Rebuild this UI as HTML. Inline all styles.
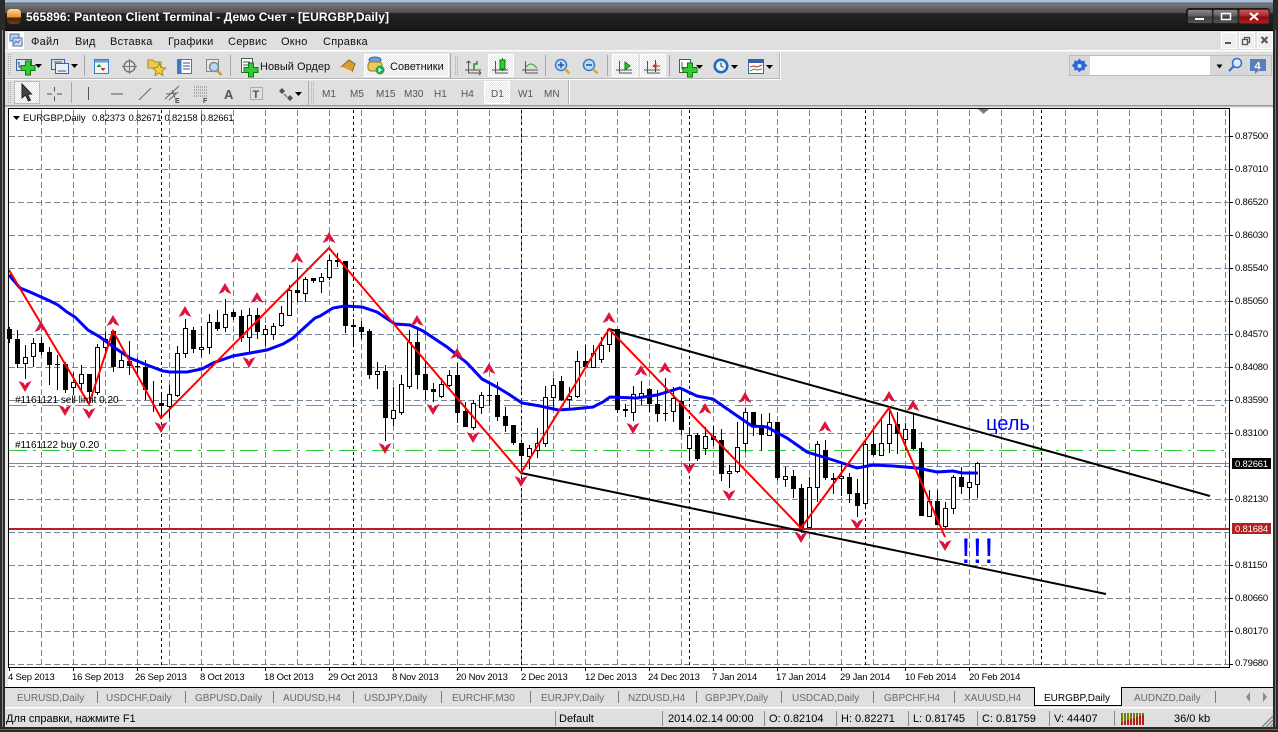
<!DOCTYPE html>
<html><head><meta charset="utf-8"><title>Terminal</title>
<style>
html,body{margin:0;padding:0;background:#dfdfdf;overflow:hidden}
svg{display:block;font-family:"Liberation Sans","Noto Sans CJK SC",sans-serif}
</style></head><body>
<svg xmlns="http://www.w3.org/2000/svg" width="1278" height="732" viewBox="0 0 1278 732">
<defs>
<linearGradient id="tb" x1="0" y1="0" x2="0" y2="1"><stop offset="0" stop-color="#8a8a8a"/><stop offset=".42" stop-color="#4d4d4d"/><stop offset=".43" stop-color="#232323"/><stop offset="1" stop-color="#161616"/></linearGradient>
<linearGradient id="wb" x1="0" y1="0" x2="0" y2="1"><stop offset="0" stop-color="#8c8c8c"/><stop offset=".5" stop-color="#5a5a5a"/><stop offset=".51" stop-color="#3a3a3a"/><stop offset="1" stop-color="#555"/></linearGradient>
<linearGradient id="wr" x1="0" y1="0" x2="0" y2="1"><stop offset="0" stop-color="#d06060"/><stop offset=".5" stop-color="#a82020"/><stop offset=".51" stop-color="#8a0c0c"/><stop offset="1" stop-color="#b02020"/></linearGradient>
<linearGradient id="org" x1="0" y1="0" x2="0" y2="1"><stop offset="0" stop-color="#ffd9a0"/><stop offset=".55" stop-color="#f08a20"/><stop offset=".56" stop-color="#3a2010"/><stop offset="1" stop-color="#7a3a10"/></linearGradient>
<pattern id="chk" width="2" height="2" patternUnits="userSpaceOnUse"><rect width="2" height="2" fill="#e4e4e4"/><rect width="1" height="1" fill="#fff"/><rect x="1" y="1" width="1" height="1" fill="#fff"/></pattern>
<g id="plus"><path d="M-2.500-7h5v4.500h4.500v5h-4.500v4.500h-5v-4.500h-4.500v-5h4.500z" fill="#35c935" stroke="#0b7d0b" stroke-width="1"/></g>
<path id="dd" d="M0 0h7l-3.500 4z" fill="#000"/>
<path id="up" d="M0-6L6.500 5 1.500 3 0 .5-1.500 3-6.500 5z" fill="#dc143c"/>
<path id="dn" d="M0 6L6.500-5 1.500-3 0-.5-1.500-3-6.500-5z" fill="#dc143c"/>
</defs>

<!-- frame / title -->
<rect width="1278" height="732" fill="#dfdfdf"/>
<rect width="1278" height="31" fill="url(#tb)"/>
<rect width="1278" height="2.500" fill="#a9c0dd"/>
<rect y="2.500" width="1278" height="1" fill="#5a6370"/>
<rect x="0" y="0" width="5" height="732" fill="#2a2a2a"/>
<rect x="2" y="30" width="1" height="698" fill="#8a8a8a"/>
<rect x="1273" y="0" width="5" height="732" fill="#2a2a2a"/>
<rect x="1275" y="30" width="1" height="698" fill="#7a7a7a"/>
<rect x="0" y="727" width="1278" height="5" fill="#2a2a2a"/>
<rect x="0" y="729" width="1278" height="1" fill="#6a6a6a"/>
<rect x="5" y="30" width="1268" height="1" fill="#000"/>
<rect x="7" y="9" width="14" height="15" rx="4" fill="url(#org)"/>
<text x="26" y="21" font-size="12" font-weight="700" fill="#fff" textLength="363">565896: Panteon Client Terminal - Демо Счет - [EURGBP,Daily]</text>
<rect x="1186" y="8" width="84" height="17" rx="3" fill="#1a1a1a"/>
<rect x="1187.500" y="9.500" width="25" height="14" rx="2" fill="url(#wb)" stroke="#222"/>
<rect x="1213" y="9.500" width="25" height="14" rx="2" fill="url(#wb)" stroke="#222"/>
<rect x="1239" y="9.500" width="30" height="14" rx="2" fill="url(#wr)" stroke="#333"/>
<rect x="1195" y="18" width="9" height="2" fill="#fff"/>
<rect x="1221.500" y="13.500" width="9" height="6" fill="none" stroke="#fff" stroke-width="1.500"/>
<path d="M1250 13l8 7M1258 13l-8 7" stroke="#fff" stroke-width="2"/>

<!-- menu -->
<rect x="8" y="32" width="16" height="17" fill="#fff"/>
<rect x="10" y="34" width="9" height="7" fill="#bcd3ee" stroke="#4a6ea8"/>
<rect x="13" y="38" width="9" height="8" fill="#cfe0f5" stroke="#4a6ea8"/>
<path d="M14 44l2-3 2 2 2-3" fill="none" stroke="#4a6ea8"/>
<g font-size="11" fill="#111" letter-spacing=".25">
<text x="31" y="45">Файл</text><text x="75" y="45">Вид</text><text x="110" y="45">Вставка</text><text x="168" y="45">Графики</text><text x="228" y="45">Сервис</text><text x="281" y="45">Окно</text><text x="323" y="45">Справка</text>
</g>
<g fill="#efefef" stroke="#fff"><rect x="1221.500" y="32.500" width="15" height="16"/><rect x="1239.500" y="32.500" width="15" height="16"/><rect x="1257.500" y="32.500" width="15" height="16"/></g>
<rect x="1225" y="42" width="6" height="2" fill="#555"/>
<path d="M1242.500 39.500h5v5h-5zM1244.500 39.500v-2h5v5h-2" fill="none" stroke="#555" stroke-width="1.300"/>
<path d="M1261.500 37l6 6M1267.500 37l-6 6" stroke="#555" stroke-width="2"/>
<rect x="5" y="50" width="1268" height="1.500" fill="#fff"/>

<!-- toolbars background -->
<rect x="5" y="52" width="775" height="26" fill="#dfdfdf"/>
<path d="M5 78.500H779.500V53" fill="none" stroke="#b4b4b4"/>
<path d="M5 79.500H780.500V53" fill="none" stroke="#fff"/>
<path d="M568.500 80V105" stroke="#b4b4b4"/><path d="M569.500 80V105" stroke="#fff"/>
<rect x="5" y="105" width="1268" height="1.500" fill="#9a9a9a"/>
<rect x="5" y="106.500" width="1268" height="1.500" fill="#e8e8e8"/>
<!-- grips -->
<g stroke="#aaa" stroke-dasharray="1 1"><path d="M8.500 54V76M10.500 54V76M8.500 82V104M10.500 82V104M455.500 56V76M457.500 56V76M311.500 82V104M313.500 82V104"/></g>
<!-- separators -->
<g stroke="#a8a8a8"><path d="M84.500 55V76M230.500 55V76M450.500 53V78M545.500 55V76M607.500 55V76M669.500 55V76M71.500 82V103M308.500 81V105"/></g>

<!-- row1 icons -->
<rect x="16.500" y="59.500" width="15" height="11" fill="#d8e6f8" stroke="#3a62a8"/>
<path d="M19 62v5h7M19 62l-1 1M26 67l-1-1" stroke="#444" fill="none"/>
<use href="#plus" x="28" y="68"/>
<use href="#dd" x="35" y="64"/>
<rect x="51.500" y="59.500" width="13" height="10" fill="#d8e6f8" stroke="#3a62a8"/>
<rect x="55.500" y="63.500" width="13" height="10" fill="#e8f0fb" stroke="#3a62a8"/>
<path d="M54 62h8M58 71h8" stroke="#555"/>
<use href="#dd" x="71" y="64"/>
<rect x="94.500" y="59.500" width="14" height="14" fill="#eef5fd" stroke="#3a7cc0"/>
<rect x="95" y="60" width="13" height="2.500" fill="#6aa0dc"/>
<path d="M99 64l2.500 3h-5zM103 71l-2.500-3h5z" fill="#1a9a1a"/><path d="M103 71l-2.500-3h5z" fill="#d83020"/>
<circle cx="129.500" cy="66.500" r="5.500" fill="none" stroke="#777" stroke-width="1.500"/><path d="M129.500 59V74M122 66.500H137" stroke="#777"/>
<path d="M148 60h5l2 2h6v6h-13z" fill="#f0c95a" stroke="#a88a20"/>
<path d="M159 63l2 4.500 4.500.5-3.500 3 1 4.500-4-2.500-4 2.500 1-4.500-3.500-3 4.500-.5z" fill="#f5d030" stroke="#a88a20"/>
<rect x="177.500" y="59.500" width="14" height="14" fill="#fff" stroke="#3a7cc0"/><rect x="178" y="60" width="3.500" height="13" fill="#3a7cc0"/><path d="M183 63h7M183 66h7M183 69h7" stroke="#4a4a8a"/>
<rect x="206.500" y="59.500" width="12" height="12" fill="#e8e8e8" stroke="#888"/>
<circle cx="214" cy="67" r="4.500" fill="#bcd8f0" stroke="#7a8a9a" stroke-width="1.500"/><path d="M217 70.500l4.500 4.500" stroke="#c9a020" stroke-width="2.500"/>
<rect x="241.500" y="58.500" width="11" height="14" fill="#fff" stroke="#555"/><path d="M243 62h7M243 65h5" stroke="#555"/>
<use href="#plus" x="251" y="70"/>
<text x="260" y="70" font-size="11" fill="#111">Новый Ордер</text>
<path d="M341 67l8-7 6 4-3 8z" fill="#d8a030" stroke="#8a6010"/><path d="M341 67l11 5" stroke="#fff0b0"/>
<rect x="364.500" y="54.500" width="84" height="22" fill="url(#chk)" stroke="#fff"/>
<ellipse cx="375" cy="60" rx="6" ry="3" fill="#6aa0dc" stroke="#3a62a8"/>
<rect x="368" y="62" width="14" height="9" rx="3" fill="#f0c95a" stroke="#8a7a30"/>
<circle cx="380" cy="70" r="4.500" fill="#20a850"/><path d="M378.500 67.500l3.500 2.500-3.500 2.500z" fill="#fff"/>
<text x="390" y="70" font-size="11" fill="#111">Советники</text>

<g stroke="#555" fill="none"><path d="M468.500 61V73H481M468.500 61l-2 2M468.500 61l2 2M481 73l-2-2M481 73l-2 2M465 70H481"/></g>
<path d="M474 70V64h3v-3" fill="none" stroke="#1a9a1a" stroke-width="1.500"/>
<rect x="488.500" y="54.500" width="25" height="22" fill="url(#chk)" stroke="#fff"/>
<g stroke="#555" fill="none"><path d="M495.500 61V73H508M492 70H508"/></g>
<path d="M502.500 58V71" stroke="#0a7a0a"/><rect x="500" y="60" width="5" height="9" fill="#30d030" stroke="#0a7a0a"/>
<g stroke="#555" fill="none"><path d="M525.500 61V73H538M522 70H538"/></g><path d="M525 69c3-6 7-7 12-1" fill="none" stroke="#3a9a3a"/>
<circle cx="561" cy="65" r="5.500" fill="#bcdcf8" stroke="#3a7cc0" stroke-width="1.500"/><path d="M558 65h6M561 62v6" stroke="#1a5aa0" stroke-width="1.500"/><path d="M565 69l4.500 4.500" stroke="#d8a828" stroke-width="2.500"/>
<circle cx="589" cy="65" r="5.500" fill="#bcdcf8" stroke="#3a7cc0" stroke-width="1.500"/><path d="M586 65h6" stroke="#1a5aa0" stroke-width="1.500"/><path d="M593 69l4.500 4.500" stroke="#d8a828" stroke-width="2.500"/>
<rect x="612.500" y="54.500" width="25" height="22" fill="url(#chk)" stroke="#fff"/>
<g stroke="#555" fill="none"><path d="M619.500 61V73H632M616 70H632"/></g><path d="M625 62l5 4-5 4z" fill="#30c030" stroke="#0a7a0a"/>
<rect x="640.500" y="54.500" width="25" height="22" fill="url(#chk)" stroke="#fff"/>
<g stroke="#555" fill="none"><path d="M647.500 61V73H660M644 70H660"/></g><path d="M655.500 60V72" stroke="#1a4a9a"/><path d="M653 66h7M656 64l-3 2 3 2z" stroke="#c03020" fill="#c03020"/>
<rect x="679.500" y="59.500" width="11" height="13" fill="#fff" stroke="#555"/><path d="M682 62v7h6" stroke="#555" fill="none"/>
<use href="#plus" x="690" y="70"/>
<use href="#dd" x="696" y="65"/>
<circle cx="721" cy="66" r="7.500" fill="#1a6ac0"/><circle cx="721" cy="66" r="5" fill="#eaf2fb"/><path d="M721 62.500V66l2.500 1.500" stroke="#333" fill="none"/>
<use href="#dd" x="731" y="65"/>
<rect x="748.500" y="59.500" width="15" height="14" fill="#fff" stroke="#3a62a8"/><rect x="749" y="60" width="14" height="3" fill="#3a62a8"/>
<path d="M750 67l4-1 3 1 5-2" stroke="#c03020" fill="none"/><path d="M750 71l4-2 3 1 5-1" stroke="#30a030" fill="none"/>
<use href="#dd" x="766" y="65"/>

<!-- search group -->
<rect x="1069.500" y="55.500" width="202" height="20" fill="#d8d8d8" stroke="#bdbdbd"/>
<rect x="1090" y="56" width="120" height="19" fill="#fff"/>
<path d="M1079.500 58.500l2 2.500 3-.5.500 3 2.500 2-2.500 2-.5 3-3-.5-2 2.500-2-2.500-3 .5-.5-3-2.500-2 2.500-2 .5-3 3 .5z" fill="#2a6ad8"/><circle cx="1079.500" cy="66" r="2" fill="#cfe0fa"/>
<path d="M1216.500 64.500h6l-3 4z" fill="#000"/>
<circle cx="1237" cy="63" r="4.500" fill="#e4eefb" stroke="#2a6ad8" stroke-width="1.500"/><path d="M1233.500 66.500l-4.500 4.500" stroke="#2a6ad8" stroke-width="2"/>
<path d="M1250 59h16v12h-8l-3 3v-3h-5z" fill="#5a7fb8"/><text x="1254.500" y="69.500" font-size="11" font-weight="700" fill="#fff">4</text>

<!-- row2 icons -->
<rect x="14.500" y="81.500" width="25" height="22" fill="url(#chk)" stroke="#bbb"/>
<path d="M22 84V98l3.500-3 3 6 2-1-3-5.500 4-.5z" fill="#444" stroke="#222"/>
<path d="M54.500 87V91.500M54.500 96.500V101M47 94H52M57 94H62" stroke="#555"/>
<path d="M88.500 87V100" stroke="#555"/><path d="M111 94H123" stroke="#555"/><path d="M139 100L151 88" stroke="#666"/>
<g stroke="#666" fill="none"><path d="M165 99L179 86M169 100L178 92M172 90l3 8M166 94l10-1"/></g><text x="175" y="103" font-size="7" font-weight="700" fill="#444">E</text>
<path d="M194 87h13M194 90h13M194 93h13M194 96h13" stroke="#777" stroke-dasharray="1 1"/><text x="203" y="103" font-size="7" font-weight="700" fill="#444">F</text>
<text x="224" y="99" font-size="13" font-weight="700" fill="#555">A</text>
<rect x="250.500" y="87.500" width="12" height="12" fill="none" stroke="#777" stroke-dasharray="1 1"/><text x="252.500" y="98" font-size="11" font-weight="700" fill="#555">T</text>
<path d="M279 91l3-3 3 3-3 3zM287 98l3-3 3 3-3 3z" fill="#555"/><path d="M284 94l3 3" stroke="#555"/><use href="#dd" x="295" y="92"/>
<g font-size="10" fill="#555">
<text x="322" y="97">M1</text><text x="350" y="97">M5</text><text x="376" y="97">M15</text><text x="404" y="97">M30</text><text x="434" y="97">H1</text><text x="461" y="97">H4</text>
</g>
<rect x="484.500" y="81.500" width="25" height="22" fill="url(#chk)" stroke="#fff"/>
<g font-size="10" fill="#555"><text x="491" y="97">D1</text><text x="518" y="97">W1</text><text x="544" y="97">MN</text></g>

<!-- chart area -->
<rect x="5" y="108" width="1268" height="579" fill="#fff"/>
<rect x="5" y="108" width="3" height="579" fill="#e8e8e8"/>

<!-- grid -->
<path fill="none" stroke="#778899" stroke-dasharray="6 3" d="M41.500 110V667M73.500 110V667M105.500 110V667M137.500 110V667M169.500 110V667M201.500 110V667M233.500 110V667M265.500 110V667M297.500 110V667M329.500 110V667M361.500 110V667M393.500 110V667M425.500 110V667M457.500 110V667M489.500 110V667M521.500 110V667M553.500 110V667M585.500 110V667M617.500 110V667M649.500 110V667M681.500 110V667M713.500 110V667M745.500 110V667M777.500 110V667M809.500 110V667M841.500 110V667M873.500 110V667M905.500 110V667M937.500 110V667M969.500 110V667M1001.500 110V667M1033.500 110V667M1065.500 110V667M1097.500 110V667M1129.500 110V667M1161.500 110V667M1193.500 110V667M1225.500 110V667"/>
<path fill="none" stroke="#778899" stroke-dasharray="6 3" d="M9 136.500H1229M9 169.500H1229M9 202.500H1229M9 235.500H1229M9 268.500H1229M9 301.500H1229M9 334.500H1229M9 367.500H1229M9 400.500H1229M9 433.500H1229M9 466.500H1229M9 499.500H1229M9 532.500H1229M9 565.500H1229M9 598.500H1229M9 631.500H1229M9 664.500H1229"/>
<path fill="none" stroke="#000" stroke-dasharray="3 3" d="M161.500 110V667M353.500 110V667M521.500 110V667M689.500 110V667M865.500 110V667M1041.500 110V667"/>
<path fill="none" stroke="#32cd32" stroke-dasharray="18 6 3 6" d="M9 405.500H1229M9 450.500H1229"/>
<path fill="none" stroke="#778899" d="M9 463.500H1229"/>
<rect x="9" y="528" width="1220" height="2" fill="#b22222"/>

<!-- candles -->
<path fill="none" stroke="#000" d="M9.500 327V343M17.500 330V368M25.500 345V379M33.500 338V367M41.500 337V355M49.500 347V385M57.500 355V390M65.500 362V393M73.500 373V395M81.500 365V393M89.500 374V400M97.500 344V395M105.500 332V357M113.500 330V372M121.500 352V368M129.500 341V375M137.500 358V377M145.500 360V400M153.500 381V412M161.500 393V418M169.500 385V418M177.500 346V397M185.500 319V358M193.500 327V353M201.500 326V357M209.500 314V354M217.500 310V331M225.500 299V332M233.500 310V320M241.500 310V342M249.500 308V353M257.500 308V339M265.500 325V346M273.500 323V340M281.500 306V327M289.500 285V316M297.500 268V302M305.500 277V302M313.500 278V283M321.500 273V293M329.500 255V280M337.500 253V267M345.500 261V333M353.500 319V346M361.500 321V339M369.500 329V379M377.500 362V389M385.500 365V441M393.500 387V426M401.500 375V415M409.500 330V389M417.500 330V389M425.500 362V400M433.500 383V402M441.500 378V398M449.500 370V387M457.500 363V423M465.500 402V427M473.500 400V430M481.500 392V414M489.500 383V406M497.500 382V421M505.500 407V432M513.500 425V445M521.500 443V473M529.500 445V469M537.500 428V458M545.500 386V447M553.500 378V408M561.500 376V401M569.500 387V410M577.500 351V398M585.500 345V367M593.500 345V367M601.500 337V363M609.500 328V352M617.500 329V413M625.500 404V417M633.500 386V421M641.500 381V405M649.500 388V412M657.500 390V422M665.500 378V421M673.500 387V422M681.500 390V435M689.500 427V461M697.500 433V461M705.500 427V455M713.500 426V446M721.500 429V481M729.500 465V488M737.500 422V473M745.500 408V452M753.500 412V436M761.500 414V451M769.500 413V436M777.500 422V480M785.500 467V487M793.500 470V498M801.500 484V533M809.500 477V528M817.500 441V502M825.500 440V480M833.500 473V494M841.500 463V496M849.500 473V503M857.500 479V517M865.500 441V507M873.500 430V456M881.500 420V456M889.500 408V453M897.500 412V454M905.500 423V450M913.500 413V450M921.500 442V516M929.500 490V516M937.500 490V525M945.500 502V528M953.500 475V514M961.500 467V494M969.500 472V499M977.500 462V498"/>
<path fill="#000" d="M7 329h5v10h-5zM15 339h5v25h-5zM39 343h5v9h-5zM47 352h5v13h-5zM55 364h5v1h-5zM63 364h5v26h-5zM87 374h5v18h-5zM111 331h5v36h-5zM127 361h5v5h-5zM135 366h5v1h-5zM143 367h5v23h-5zM159 403h5v3h-5zM191 330h5v19h-5zM215 322h5v7h-5zM231 312h5v5h-5zM239 316h5v22h-5zM255 315h5v17h-5zM295 290h5v3h-5zM311 278h5v3h-5zM335 260h5v2h-5zM343 261h5v65h-5zM351 325h5v2h-5zM359 327h5v5h-5zM367 331h5v44h-5zM383 371h5v47h-5zM415 342h5v33h-5zM423 374h5v16h-5zM431 389h5v3h-5zM455 375h5v38h-5zM463 411h5v16h-5zM487 395h5v1h-5zM495 395h5v22h-5zM503 416h5v10h-5zM511 425h5v18h-5zM519 443h5v13h-5zM559 381h5v19h-5zM583 361h5v6h-5zM615 329h5v81h-5zM623 409h5v2h-5zM647 389h5v15h-5zM655 404h5v10h-5zM663 413h5v1h-5zM679 401h5v29h-5zM695 435h5v24h-5zM711 436h5v4h-5zM719 440h5v34h-5zM751 412h5v13h-5zM759 425h5v10h-5zM775 422h5v56h-5zM791 476h5v13h-5zM799 488h5v40h-5zM823 450h5v28h-5zM831 478h5v2h-5zM847 477h5v17h-5zM855 493h5v13h-5zM871 444h5v11h-5zM895 424h5v10h-5zM911 429h5v20h-5zM919 448h5v68h-5zM935 501h5v24h-5zM959 477h5v10h-5z"/>
<path fill="#fff" stroke="#000" d="M23.500 357.500h4v6h-4zM31.500 343.500h4v13h-4zM71.500 382.500h4v5h-4zM79.500 374.500h4v9h-4zM95.500 347.500h4v45h-4zM103.500 339.500h4v8h-4zM119.500 360.500h4v7h-4zM167.500 394.500h4v12h-4zM175.500 353.500h4v42h-4zM183.500 328.500h4v25h-4zM199.500 347.500h4v2h-4zM207.500 322.500h4v25h-4zM223.500 314.500h4v13h-4zM247.500 315.500h4v22h-4zM263.500 329.500h4v5h-4zM271.500 326.500h4v8h-4zM279.500 313.500h4v12h-4zM287.500 290.500h4v25h-4zM303.500 279.500h4v14h-4zM319.500 277.500h4v4h-4zM327.500 260.500h4v17h-4zM375.500 371.500h4v3h-4zM391.500 410.500h4v8h-4zM399.500 384.500h4v28h-4zM407.500 342.500h4v44h-4zM439.500 384.500h4v12h-4zM447.500 375.500h4v10h-4zM471.500 403.500h4v24h-4zM479.500 395.500h4v12h-4zM527.500 448.500h4v8h-4zM535.500 443.500h4v7h-4zM543.500 397.500h4v46h-4zM551.500 385.500h4v12h-4zM567.500 396.500h4v3h-4zM575.500 361.500h4v35h-4zM591.500 353.500h4v14h-4zM599.500 345.500h4v14h-4zM607.500 329.500h4v15h-4zM631.500 394.500h4v18h-4zM639.500 393.500h4v3h-4zM671.500 398.500h4v13h-4zM687.500 435.500h4v13h-4zM703.500 436.500h4v12h-4zM727.500 471.500h4v2h-4zM735.500 447.500h4v24h-4zM743.500 412.500h4v31h-4zM767.500 422.500h4v13h-4zM783.500 476.500h4v3h-4zM807.500 487.500h4v40h-4zM815.500 444.500h4v43h-4zM839.500 476.500h4v2h-4zM863.500 444.500h4v59h-4zM879.500 443.500h4v12h-4zM887.500 424.500h4v19h-4zM903.500 429.500h4v10h-4zM927.500 501.500h4v15h-4zM943.500 508.500h4v18h-4zM951.500 477.500h4v31h-4zM967.500 482.500h4v5h-4zM975.500 463.500h4v21h-4z"/>

<!-- indicator lines -->
<polyline fill="none" stroke="#0000ff" stroke-width="3" points="9,275 20,288 30,292 50,301 58,305 67,312 75,317 88,330 100,337 115,348 130,358 147,365 163,371 170,372 187,372 202,369 213,363 233,356 250,353 267,350 283,344 293,338 305,327 315,318 320,316 333,308 345,306 362,307 377,312 395,324 410,325 423,331 447,347 467,363 482,379 497,387 510,395 522,403 540,406 558,410 573,409 593,407 603,402 610,397 637,398 657,395 680,388 697,396 713,399 733,413 752,426 767,427 787,438 807,452 833,460 857,468 873,465 893,466 917,468 937,472 953,471 962,473 978,473"/>
<path fill="none" stroke="#000" stroke-width="2" d="M609 329L1210 496M521 473L1106 594"/>
<polyline fill="none" stroke="#ff0000" stroke-width="2" points="9,270 89,404 113,331 161,418 329,248 521,473 609,329 801,528 889,408 945,537"/>

<!-- fractal arrows -->
<use href="#up" x="41" y="327"/><use href="#up" x="113" y="321"/><use href="#up" x="185" y="312"/><use href="#up" x="225" y="289"/><use href="#up" x="257" y="298"/><use href="#up" x="297" y="258"/><use href="#up" x="329" y="238"/><use href="#up" x="417" y="321"/><use href="#up" x="457" y="354"/><use href="#up" x="489" y="369"/><use href="#up" x="609" y="318"/><use href="#up" x="641" y="371"/><use href="#up" x="665" y="368"/><use href="#up" x="705" y="409"/><use href="#up" x="745" y="398"/><use href="#up" x="825" y="427"/><use href="#up" x="889" y="397"/><use href="#up" x="913" y="406"/>
<use href="#dn" x="25" y="386"/><use href="#dn" x="65" y="410"/><use href="#dn" x="89" y="413"/><use href="#dn" x="161" y="427"/><use href="#dn" x="249" y="362"/><use href="#dn" x="385" y="448"/><use href="#dn" x="433" y="409"/><use href="#dn" x="473" y="437"/><use href="#dn" x="521" y="481"/><use href="#dn" x="633" y="428"/><use href="#dn" x="689" y="468"/><use href="#dn" x="729" y="495"/><use href="#dn" x="801" y="537"/><use href="#dn" x="857" y="524"/><use href="#dn" x="945" y="545"/>

<!-- chart text -->
<text x="15" y="403" font-size="10" fill="#000">#1161121 sell limit 0.20</text>
<text x="15" y="448" font-size="10" fill="#000">#1161122 buy 0.20</text>
<text x="986" y="430" font-size="20" fill="#0000ff">цель</text>
<g font-size="35" fill="#0000ff"><text x="961" y="563">!</text><text x="972.500" y="563">!</text><text x="984" y="563">!</text></g>
<path d="M13 116h7l-3.500 4z" fill="#000"/>
<g font-size="9.500" fill="#000"><text x="23" y="121">EURGBP,Daily</text><text x="92" y="121" letter-spacing="-.2">0.82373</text><text x="128.500" y="121" letter-spacing="-.2">0.82671</text><text x="164.500" y="121" letter-spacing="-.2">0.82158</text><text x="200.500" y="121" letter-spacing="-.2">0.82661</text></g>
<path d="M978 109h11l-5.500 5z" fill="#708090"/>

<!-- chart border -->
<path d="M8.500 667.500V108.500H1229.500V667.500Z" fill="none" stroke="#000"/>

<!-- price axis -->
<path stroke="#000" d="M1230 136.500h3M1230 169.500h3M1230 202.500h3M1230 235.500h3M1230 268.500h3M1230 301.500h3M1230 334.500h3M1230 367.500h3M1230 400.500h3M1230 433.500h3M1230 499.500h3M1230 565.500h3M1230 598.500h3M1230 631.500h3M1230 664.500h3"/>
<g font-size="9.500" fill="#000" letter-spacing="-.2">
<text x="1235" y="139">0.87500</text><text x="1235" y="172">0.87010</text><text x="1235" y="205">0.86520</text><text x="1235" y="238">0.86030</text><text x="1235" y="271">0.85540</text><text x="1235" y="304">0.85050</text><text x="1235" y="337">0.84570</text><text x="1235" y="370">0.84080</text><text x="1235" y="403">0.83590</text><text x="1235" y="436">0.83100</text><text x="1235" y="502">0.82130</text><text x="1235" y="568">0.81150</text><text x="1235" y="601">0.80660</text><text x="1235" y="634">0.80170</text><text x="1235" y="666">0.79680</text>
</g>
<rect x="1232" y="458" width="39" height="11" fill="#000"/>
<text x="1235" y="467" font-size="9.500" fill="#fff" letter-spacing="-.2">0.82661</text>
<rect x="1232" y="523" width="39" height="11" fill="#b22222"/>
<text x="1235" y="532" font-size="9.500" fill="#fff" letter-spacing="-.2">0.81684</text>

<!-- time axis -->
<path stroke="#000" d="M9.500 668v3M73.500 668v3M137.500 668v3M201.500 668v3M265.500 668v3M329.500 668v3M393.500 668v3M457.500 668v3M521.500 668v3M585.500 668v3M649.500 668v3M713.500 668v3M777.500 668v3M841.500 668v3M905.500 668v3M969.500 668v3"/>
<g font-size="9.500" fill="#000" letter-spacing="-.2">
<text x="8" y="680">4 Sep 2013</text><text x="72" y="680">16 Sep 2013</text><text x="135" y="680">26 Sep 2013</text><text x="200" y="680">8 Oct 2013</text><text x="264" y="680">18 Oct 2013</text><text x="328" y="680">29 Oct 2013</text><text x="392" y="680">8 Nov 2013</text><text x="456" y="680">20 Nov 2013</text><text x="521" y="680">2 Dec 2013</text><text x="585" y="680">12 Dec 2013</text><text x="648" y="680">24 Dec 2013</text><text x="712" y="680">7 Jan 2014</text><text x="776" y="680">17 Jan 2014</text><text x="840" y="680">29 Jan 2014</text><text x="905" y="680">10 Feb 2014</text><text x="969" y="680">20 Feb 2014</text>
</g>

<!-- tabs -->
<rect x="5" y="687" width="1268" height="1" fill="#000"/>
<rect x="5" y="688" width="1268" height="19" fill="#dfdfdf"/>
<path stroke="#7a7a7a" d="M97.500 691v12M185.500 691v12M273.500 691v12M353.500 691v12M441.500 691v12M530.500 691v12M618.500 691v12M696.500 691v12M781.500 691v12M873.500 691v12M954.500 691v12M1215.500 691v12"/>
<g font-size="10" fill="#6a6a6a">
<text x="17" y="701">EURUSD,Daily</text><text x="106" y="701">USDCHF,Daily</text><text x="195" y="701">GBPUSD,Daily</text><text x="283" y="701">AUDUSD,H4</text><text x="364" y="701">USDJPY,Daily</text><text x="452" y="701">EURCHF,M30</text><text x="541" y="701">EURJPY,Daily</text><text x="628" y="701">NZDUSD,H4</text><text x="705" y="701">GBPJPY,Daily</text><text x="792" y="701">USDCAD,Daily</text><text x="884" y="701">GBPCHF,H4</text><text x="964" y="701">XAUUSD,H4</text><text x="1134" y="701">AUDNZD,Daily</text>
</g>
<path d="M1034.500 687.500V705.500H1121.500V687.500" fill="#fff" stroke="#000"/>
<rect x="1035" y="687" width="86" height="2" fill="#fff"/>
<text x="1044" y="701" font-size="10" fill="#000">EURGBP,Daily</text>
<path d="M1250 692v10l-4-5zM1263 692v10l4-5z" fill="#8a8a8a"/>
<rect x="5" y="707" width="1268" height="1.500" fill="#fff"/>

<!-- status -->
<rect x="5" y="708.500" width="1268" height="18.500" fill="#dfdfdf"/>
<path stroke="#8a8a8a" d="M555.500 711v15M662.500 711v15M764.500 711v15M836.500 711v15M908.500 711v15M977.500 711v15M1049.500 711v15M1114.500 711v15"/>
<g font-size="11" fill="#000">
<text x="6" y="722">Для справки, нажмите F1</text><text x="559" y="722">Default</text><text x="668" y="722">2014.02.14 00:00</text><text x="769" y="722">O: 0.82104</text><text x="841" y="722">H: 0.82271</text><text x="913" y="722">L: 0.81745</text><text x="982" y="722">C: 0.81759</text><text x="1054" y="722">V: 44407</text><text x="1174" y="722">36/0 kb</text>
</g>
<g fill="#6f8000"><rect x="1121" y="713" width="2" height="9"/><rect x="1124" y="713" width="2" height="8"/><rect x="1127" y="713" width="2" height="7"/><rect x="1130" y="713" width="2" height="6"/><rect x="1133" y="713" width="2" height="5"/><rect x="1136" y="713" width="2" height="4"/><rect x="1139" y="713" width="2" height="3"/><rect x="1142" y="713" width="2" height="2"/></g>
<g fill="#b02010"><rect x="1121" y="722" width="2" height="3"/><rect x="1124" y="721" width="2" height="4"/><rect x="1127" y="720" width="2" height="5"/><rect x="1130" y="719" width="2" height="6"/><rect x="1133" y="718" width="2" height="7"/><rect x="1136" y="717" width="2" height="8"/><rect x="1139" y="716" width="2" height="9"/><rect x="1142" y="715" width="2" height="10"/></g>
<path stroke="#8a8a8a" stroke-width="1.500" d="M1262 727l11-11M1266 727l7-7M1270 727l3-3"/>
</svg>
</body></html>
